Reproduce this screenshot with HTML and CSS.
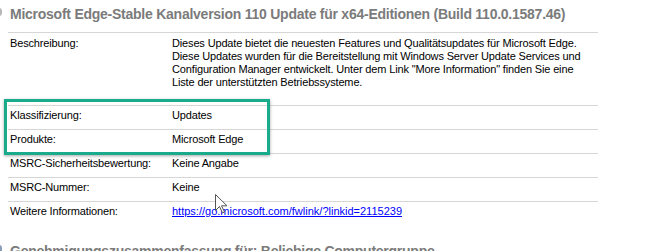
FILE: index.html
```html
<!DOCTYPE html>
<html lang="de">
<head>
<meta charset="utf-8">
<link rel="stylesheet" href="styles.css">
</head>
<body>
<div class="page">
  <h2 class="section-title"><span class="sec-icon"></span>Microsoft Edge-Stable Kanalversion 110 Update für x64-Editionen (Build 110.0.1587.46)</h2>
  <div class="details">
    <div class="row row-desc">
      <div class="label">Beschreibung:</div>
      <div class="value">Dieses Update bietet die neuesten Features und Qualitätsupdates für Microsoft Edge.<br>Diese Updates wurden für die Bereitstellung mit Windows Server Update Services und<br>Configuration Manager entwickelt. Unter dem Link "More Information" finden Sie eine<br>Liste der unterstützten Betriebssysteme.</div>
    </div>
    <div class="row">
      <div class="label">Klassifizierung:</div>
      <div class="value">Updates</div>
    </div>
    <div class="row">
      <div class="label">Produkte:</div>
      <div class="value">Microsoft Edge</div>
    </div>
    <div class="row">
      <div class="label">MSRC-Sicherheitsbewertung:</div>
      <div class="value">Keine Angabe</div>
    </div>
    <div class="row">
      <div class="label">MSRC-Nummer:</div>
      <div class="value">Keine</div>
    </div>
    <div class="row">
      <div class="label">Weitere Informationen:</div>
      <div class="value"><a class="link" href="#">https://go.microsoft.com/fwlink/?linkid=2115239</a></div>
    </div>
  </div>
  <h2 class="section-title section-next"><span class="sec-icon sec-icon-blue"></span>Genehmigungszusammenfassung für: Beliebige Computergruppe</h2>
  <div class="highlight"></div>
  <svg class="cursor" width="13" height="20" viewBox="0 0 13 20"><path d="M0.5 0.5 L0.5 16.5 L4.5 12.5 L7.5 19 L9.5 18 L6.5 11.8 L12 11.8 Z" fill="#fff" stroke="#555" stroke-width="1" stroke-linejoin="miter"/></svg>
</div>
</body>
</html>
```

FILE: styles.css
```css
html, body {
  margin: 0;
  padding: 0;
  background: #ffffff;
}
.page {
  position: relative;
  width: 651px;
  height: 251px;
  overflow: hidden;
  font-family: "Liberation Sans", Arial, sans-serif;
  font-size: 11px;
  color: #000;
}
.section-title {
  margin: 0;
  padding: 6px 0 0 10px;
  height: 26px;
  box-sizing: border-box;
  font-family: "Liberation Sans", Arial, sans-serif;
  font-size: 14px;
  font-weight: bold;
  color: #7b7b7b;
  line-height: 17px;
  white-space: nowrap;
  position: relative;
  letter-spacing: -0.25px;
}
.sec-icon {
  position: absolute;
  left: -12px;
  top: 8px;
  width: 14px;
  height: 8px;
  border-radius: 3px;
  background: #b8b8b8;
}
.sec-icon-blue {
  background: #8a9bb8;
}
.details {
  margin: 6px 0 0 8px;
  width: 590px;
}
.row {
  display: grid;
  grid-template-columns: 162px 1fr;
  border-top: 1px solid #d6d6d6;
  padding: 3px 0 7px 2px;
  line-height: 13px;
  letter-spacing: -0.15px;
}
.row-desc {
  padding-top: 4px;
  padding-bottom: 16px;
}
.value {
  white-space: nowrap;
}
.link {
  color: #0000ff;
  text-decoration: underline;
  letter-spacing: 0;
}
.section-next {
  margin-top: 12px;
}
.highlight {
  position: absolute;
  left: 4px;
  top: 99px;
  width: 266px;
  height: 56px;
  box-sizing: border-box;
  border: 3px solid #1aab8c;
  box-shadow: 0 1px 3px rgba(0,0,0,0.35);
}
.cursor {
  position: absolute;
  left: 215px;
  top: 194px;
}
```
